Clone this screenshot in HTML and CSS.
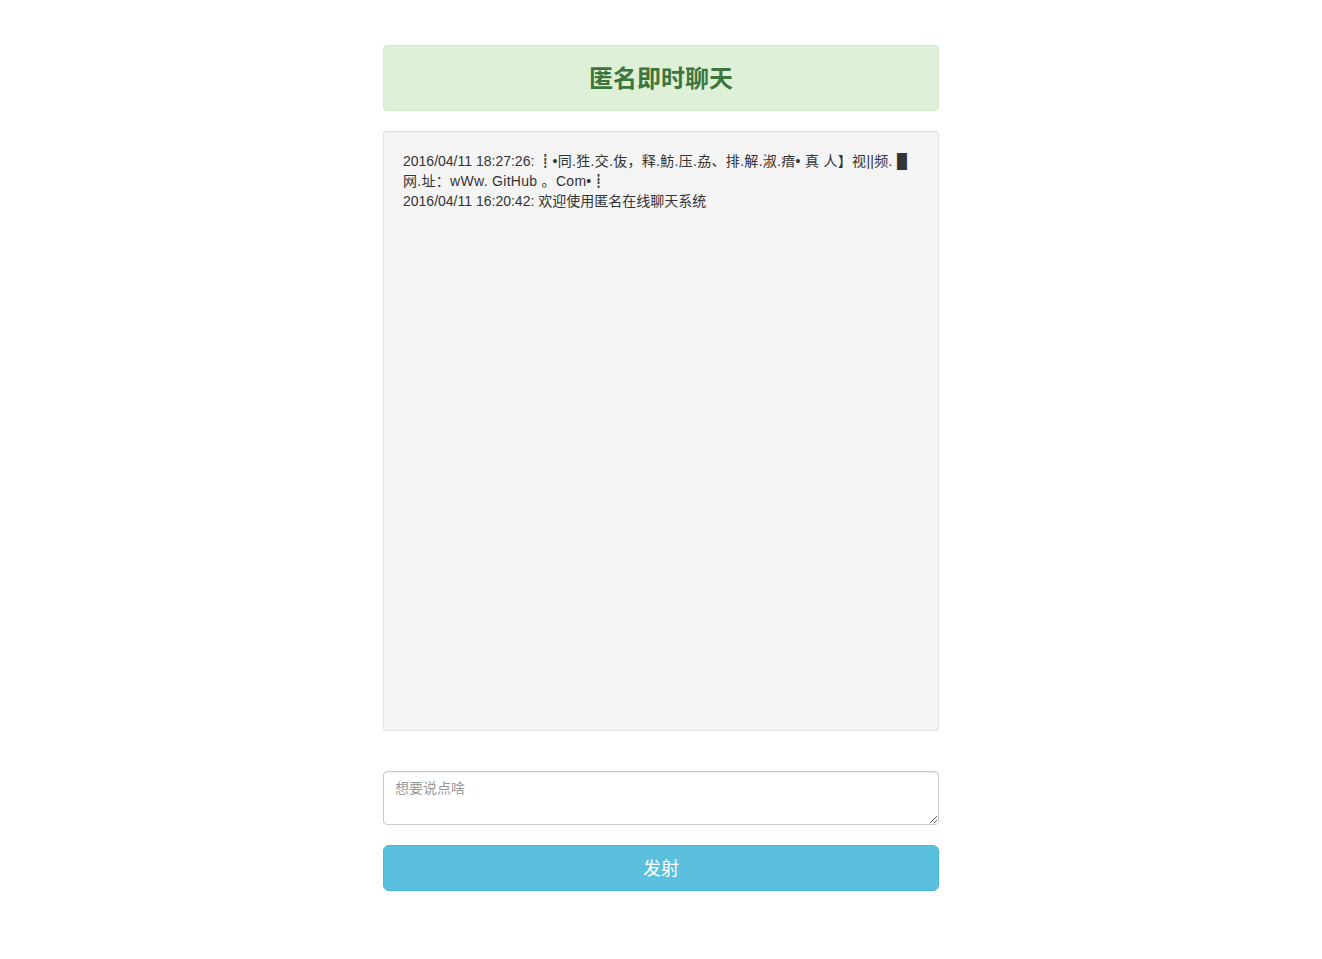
FILE: index.html
```html
<!DOCTYPE html>
<html lang="zh-CN">
<head>
<meta charset="utf-8">
<title>匿名即时聊天</title>
<link rel="stylesheet" href="styles.css">
</head>
<body>
<div class="container">
  <div class="header"><h3 class="title">匿名即时聊天</h3></div>
  <div class="chat">
    <div class="msg">2016/04/11 18:27:26: <span class="spam">┋•同.狌.交.伖，释.魴.压.劦、排.解.淑.瘖• 真 人】视||频. █ 网.址：wWw. GitHub 。Com•┋</span></div>
    <div class="msg">2016/04/11 16:20:42: 欢迎使用匿名在线聊天系统</div>
  </div>
  <textarea class="input" placeholder="想要说点啥"></textarea>
  <button class="send">发射</button>
</div>
</body>
</html>
```
FILE: styles.css
```css
* { box-sizing: border-box; }
html, body { margin: 0; padding: 0; background: #fff; }
body {
  font-family: "Liberation Sans", Arial, "Noto Sans CJK SC", sans-serif;
  font-size: 14px;
  line-height: 20px;
  color: #333;
}
.container {
  width: 556px;
  margin: 45px auto 0;
  display: flex;
  flex-direction: column;
}
.header {
  background: #dff0d8;
  border: 1px solid #d6e9c6;
  border-radius: 4px;
  padding: 16px 15px 14px;
}
.title {
  margin: 0;
  text-align: center;
  color: #3c763d;
  font-size: 24px;
  line-height: 34px;
  font-weight: bold;
}
.chat {
  margin-top: 20px;
  height: 600px;
  background: #f4f4f4;
  border: 1px solid #e0e0e0;
  border-radius: 3px;
  padding: 19px;
  overflow: hidden;
}
.spam { letter-spacing: 0.3px; }
.input {
  display: block;
  margin-top: 40px;
  height: 54px;
  width: 100%;
  padding: 6px 11px;
  font-family: inherit;
  font-size: 14px;
  line-height: 20px;
  border: 1px solid #ccc;
  border-radius: 4px;
  box-shadow: inset 0 1px 1px rgba(0,0,0,.075);
  color: #555;
  resize: vertical;
}
.input::placeholder { color: #999; }
.send {
  margin-top: 20px;
  height: 46px;
  width: 100%;
  padding: 3px 16px 0;
  background: #5bc0de;
  border: 1px solid #46b8da;
  border-radius: 6px;
  color: #fff;
  font-family: inherit;
  font-size: 18px;
  line-height: 1.33;
  cursor: pointer;
}
```
